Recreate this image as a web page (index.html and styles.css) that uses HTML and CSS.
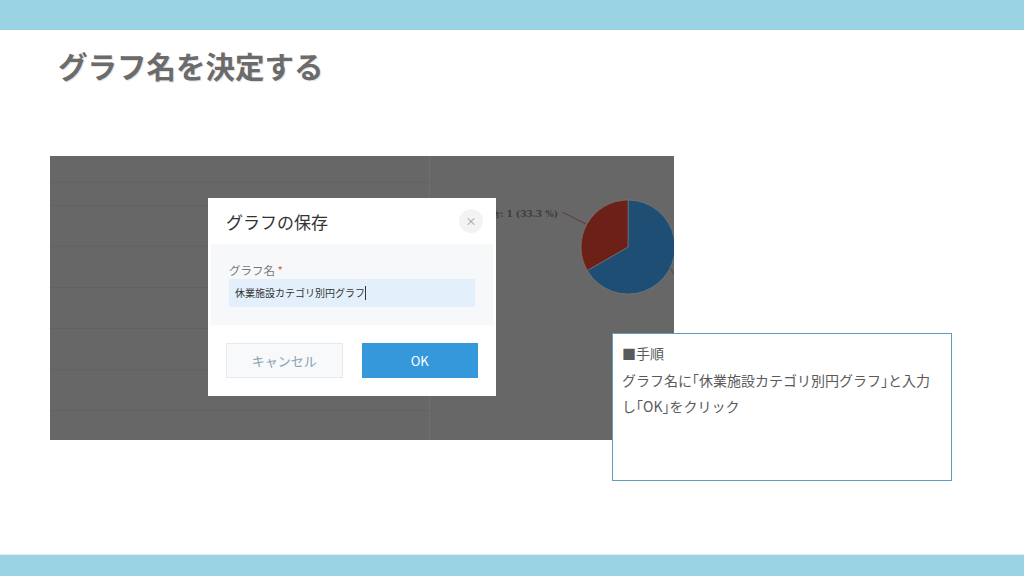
FILE: index.html
```html
<!DOCTYPE html>
<html lang="ja">
<head>
    <meta charset="UTF-8">
    <meta name="viewport" content="width=device-width, initial-scale=1.0">
    <title>グラフ名を決定する</title>
    <link rel="stylesheet" href="styles.css">
</head>
<body>

    <div class="slide">
        <div class="topbar"></div>
        <h1 class="title">グラフ名を決定する</h1>

        <div class="content">
            <div class="shot">
                <div class="rows">
                    <div class="row row-head"></div>
                    <div class="row row-sm"></div>
                    <div class="row"></div>
                    <div class="row"></div>
                    <div class="row"></div>
                    <div class="row"></div>
                    <div class="row"></div>
                </div>
                <div class="chart">
                    <svg width="244" height="284" viewBox="0 0 244 284">
                        <text class="pie-label" x="128" y="61" text-anchor="end">総合: 1 (33.3 %)</text>
                        <line x1="132" y1="56" x2="156" y2="68" stroke="#5a3a38" stroke-width="1"/>
                        <line x1="244" y1="118" x2="240" y2="112" stroke="#3f4f5a" stroke-width="1"/>
                        <path d="M198,91 L198,44 A47,47 0 1,1 157.3,114.5 Z" fill="#1e4e73" stroke="#7d7d7d" stroke-width="0.6"/>
                        <path d="M198,91 L198,44 A47,47 0 0,0 157.3,114.5 Z" fill="#6c2018" stroke="#7d7d7d" stroke-width="0.6"/>
                    </svg>
                </div>

                <div class="dialog">
                    <div class="dialog-head">
                        <span class="dialog-title">グラフの保存</span>
                        <span class="dialog-close">×</span>
                    </div>
                    <div class="dialog-body">
                        <div class="field-label">グラフ名 <span class="req">*</span></div>
                        <div class="field-input">休業施設カテゴリ別円グラフ<span class="caret"></span></div>
                    </div>
                    <div class="dialog-foot">
                        <button class="btn btn-cancel">キャンセル</button>
                        <button class="btn btn-ok">OK</button>
                    </div>
                </div>
            </div>

            <div class="note">
                <div>■手順</div>
                <div>グラフ名に「休業施設カテゴリ別円グラフ」と入力</div>
                <div>し「OK」をクリック</div>
            </div>
        </div>

        <div class="bottombar"></div>
    </div>

</body>
</html>
```

FILE: styles.css
```css
body {
    margin: 0;
    background: #fff;
    font-family: "Noto Sans CJK JP", "Noto Sans", sans-serif;
}
.slide {
    width: 1024px;
    height: 576px;
    display: flex;
    flex-direction: column;
    overflow: hidden;
}
.topbar {
    height: 30px;
    background: #9ad4e3;
}
.bottombar {
    margin-top: auto;
    height: 21px;
    background: #9ad4e3;
    border-top: 1px solid #d6eef4;
}
.title {
    margin: 15px 0 0 58px;
    height: 40px;
    line-height: 40px;
    font-size: 29.5px;
    font-weight: bold;
    color: #6b6b6b;
    text-shadow: 1px 1px 1px rgba(0, 0, 0, 0.12);
}
.content {
    position: relative;
    margin-top: 71px;
    padding-left: 50px;
}
.shot {
    position: relative;
    width: 624px;
    height: 284px;
    background: #676767;
    display: grid;
    grid-template-columns: 380px 1fr;
    overflow: hidden;
}
.rows {
    border-right: 1px solid #6f6f6f;
}
.row {
    height: 40px;
    border-bottom: 1px solid #626262;
}
.row-head {
    height: 26px;
}
.row-sm {
    height: 22px;
}
.chart svg {
    display: block;
}
.pie-label {
    font-family: "DejaVu Serif", serif;
    font-size: 9px;
    font-weight: bold;
    fill: #3d3d3d;
}

/* dialog over the screenshot */
.dialog {
    position: absolute;
    left: 158px;
    top: 42px;
    width: 288px;
    height: 198px;
    background: #fff;
    display: flex;
    flex-direction: column;
}
.dialog-head {
    height: 46px;
    display: flex;
    align-items: center;
    justify-content: space-between;
    padding: 0 13px 0 18px;
}
.dialog-title {
    font-size: 17px;
    color: #333;
}
.dialog-close {
    width: 24px;
    height: 24px;
    border-radius: 50%;
    background: #f3f3f3;
    color: #999;
    font-size: 11px;
    line-height: 24px;
    text-align: center;
}
.dialog-body {
    background: #f6f8fa;
    padding: 17px 18px 18px;
    margin: 0 3px;
}
.field-label {
    height: 18px;
    line-height: 18px;
    font-size: 11.5px;
    color: #777;
}
.req {
    color: #e15b4f;
}
.field-input {
    height: 28px;
    line-height: 28px;
    background: #e3f0fb;
    padding: 0 6px;
    font-size: 10px;
    color: #333;
    display: flex;
    align-items: center;
}
.caret {
    width: 1px;
    height: 14px;
    background: #333;
}
.dialog-foot {
    display: flex;
    gap: 19px;
    padding: 18px 18px 0;
}
.btn {
    width: 117px;
    height: 35px;
    font-family: inherit;
    font-size: 13px;
    border: 1px solid transparent;
    padding: 0;
}
.btn-cancel {
    background: #f7f9fa;
    border-color: #e6eaec;
    color: #8aa2b2;
}
.btn-ok {
    background: #3498db;
    color: #fff;
}

/* note box over the right edge */
.note {
    position: absolute;
    left: 612px;
    top: 177px;
    width: 329px;
    height: 140px;
    padding: 6px 0 0 9px;
    background: #fff;
    border: 1px solid #5f9dc0;
    font-size: 14px;
    line-height: 26.5px;
    color: #5a5a5a;
    font-feature-settings: "halt";
    white-space: nowrap;
}
```
